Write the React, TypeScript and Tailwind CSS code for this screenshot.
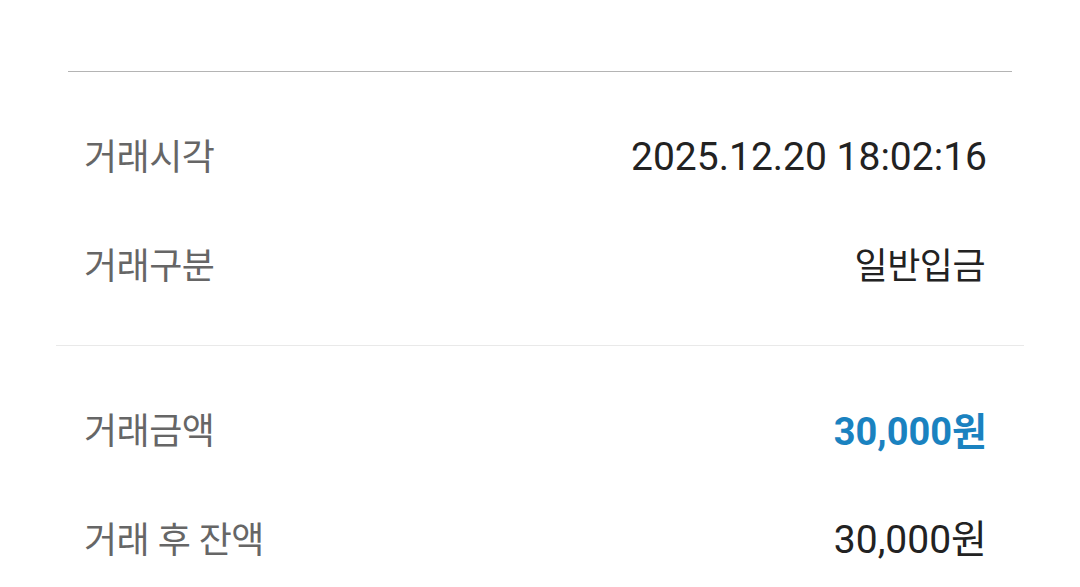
const rowsTop = [
  { label: "거래시각", value: "2025.12.20 18:02:16", kind: "num" },
  { label: "거래구분", value: "일반입금", kind: "ko" },
];

const rowsBottom = [
  { label: "거래금액", value: "30,000원", kind: "amount" },
  { label: "거래 후 잔액", value: "30,000원", kind: "num" },
];

function Row({ label, value, kind }: { label: string; value: string; kind: string }) {
  let valueCls = "text-[39px] text-[#222222]";
  if (kind === "ko") valueCls = "text-[36px] tracking-[-0.5px] mr-[2px] text-[#222222]";
  if (kind === "amount") valueCls = "text-[38px] font-bold text-[#1a82c0]";
  return (
    <div className="flex h-[109px] items-center justify-between">
      <span className="text-[36px] tracking-[-0.5px] text-[#666666]">{label}</span>
      <span className={valueCls}>{value}</span>
    </div>
  );
}

export default function App() {
  return (
    <div
      className="h-[587px] w-[1080px] overflow-hidden bg-white leading-none"
      style={{ fontFamily: 'Roboto, "Noto Sans CJK KR", sans-serif' }}
    >
      <div className="pt-[71px]">
        <div className="mx-[68px] border-t border-[#b4b4b4]" />
      </div>
      <div className="pl-[84px] pr-[93px] pt-[31px] pb-[24px]">
        {rowsTop.map((r) => (
          <Row key={r.label} {...r} />
        ))}
      </div>
      <div className="mx-[56px] border-t border-[#e9e9e9]" />
      <div className="pl-[84px] pr-[93px] pt-[31px]">
        {rowsBottom.map((r) => (
          <Row key={r.label} {...r} />
        ))}
      </div>
    </div>
  );
}
